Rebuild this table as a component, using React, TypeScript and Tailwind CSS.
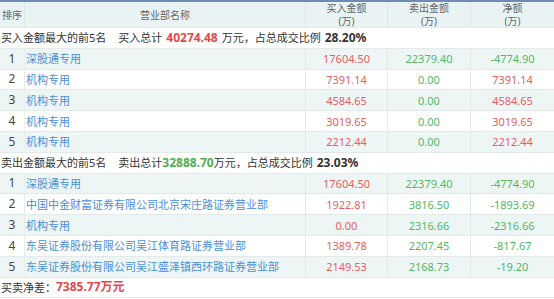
import React from "react";

type Row = { n: number; name: string; buy: string; sell: string; net: string; netPos: boolean };

const buyRows: Row[] = [
  { n: 1, name: "深股通专用", buy: "17604.50", sell: "22379.40", net: "-4774.90", netPos: false },
  { n: 2, name: "机构专用", buy: "7391.14", sell: "0.00", net: "7391.14", netPos: true },
  { n: 3, name: "机构专用", buy: "4584.65", sell: "0.00", net: "4584.65", netPos: true },
  { n: 4, name: "机构专用", buy: "3019.65", sell: "0.00", net: "3019.65", netPos: true },
  { n: 5, name: "机构专用", buy: "2212.44", sell: "0.00", net: "2212.44", netPos: true },
];

const sellRows: Row[] = [
  { n: 1, name: "深股通专用", buy: "17604.50", sell: "22379.40", net: "-4774.90", netPos: false },
  { n: 2, name: "中国中金财富证券有限公司北京宋庄路证券营业部", buy: "1922.81", sell: "3816.50", net: "-1893.69", netPos: false },
  { n: 3, name: "机构专用", buy: "0.00", sell: "2316.66", net: "-2316.66", netPos: false },
  { n: 4, name: "东吴证券股份有限公司吴江体育路证券营业部", buy: "1389.78", sell: "2207.45", net: "-817.67", netPos: false },
  { n: 5, name: "东吴证券股份有限公司吴江盛泽镇西环路证券营业部", buy: "2149.53", sell: "2168.73", net: "-19.20", netPos: false },
];

const grid = "grid grid-cols-[25px_281px_82px_83px_83px]";
const red = "text-[#e8605f]";
const green = "text-[#55b865]";

function DataRow({ r }: { r: Row }) {
  const bg = r.n % 2 === 1 ? "bg-[#edf6f5]" : "bg-white";
  return (
    <div className={`${grid} ${bg} h-[20.8px] border-b border-[#e3ebea] items-center`}>
      <div className="text-center text-[#444] border-r border-[#e6eeed] h-full flex items-center justify-center text-[12px]">{r.n}</div>
      <div className="pl-[1px] text-[#4a8fd8] whitespace-nowrap overflow-hidden border-r border-[#e3ebea] h-full flex items-center">{r.name}</div>
      <div className={`text-center ${red} border-r border-[#e3ebea] h-full flex items-center justify-center`}>{r.buy}</div>
      <div className={`text-center ${green} border-r border-[#e3ebea] h-full flex items-center justify-center`}>{r.sell}</div>
      <div className={`text-center ${r.netPos ? red : green} h-full flex items-center justify-center`}>{r.net}</div>
    </div>
  );
}

export default function App() {
  return (
    <div
      className="w-[554px] h-[299px] bg-white text-[11px] leading-none overflow-hidden"
      style={{ fontFamily: '"Noto Sans", "Noto Sans CJK SC", sans-serif' }}
    >
      <div className="border-t-2 border-[#6f8bb3]">
        <div className={`${grid} h-[26px] bg-[#e9f3f3] text-[#666] text-[10px] border-b border-[#e3ebea]`}>
          <div className="flex items-center justify-center border-r border-[#dde7e6]">排序</div>
          <div className="flex items-center justify-center border-r border-[#dde7e6]">营业部名称</div>
          <div className="flex flex-col items-center justify-center gap-[3px] border-r border-[#dde7e6]">
            <span>买入金额</span>
            <span>(万)</span>
          </div>
          <div className="flex flex-col items-center justify-center gap-[3px] border-r border-[#dde7e6]">
            <span>卖出金额</span>
            <span>(万)</span>
          </div>
          <div className="flex flex-col items-center justify-center gap-[3px]">
            <span>净额</span>
            <span>(万)</span>
          </div>
        </div>
      </div>

      <div className="h-[20.8px] bg-white border-b border-[#e3ebea] flex items-center pl-[1px] text-[#333] whitespace-nowrap">
        <span>买入金额最大的前5名</span>
        <span className="ml-[12px]">买入总计</span>
        <span className="font-bold text-[#e24a4a] mx-[4px] text-[12px]">40274.48</span>
        <span>万元，占总成交比例</span>
        <span className="font-bold text-[#333] ml-[4px] text-[12px]">28.20%</span>
      </div>
      {buyRows.map((r) => (
        <DataRow key={"b" + r.n} r={r} />
      ))}

      <div className="h-[20.8px] bg-white border-b border-[#e3ebea] flex items-center pl-[1px] text-[#333] whitespace-nowrap">
        <span>卖出金额最大的前5名</span>
        <span className="ml-[12px]">卖出总计</span>
        <span className="font-bold text-[#4caf50] text-[12px]">32888.70</span>
        <span>万元，占总成交比例</span>
        <span className="font-bold text-[#333] ml-[4px] text-[12px]">23.03%</span>
      </div>
      {sellRows.map((r) => (
        <DataRow key={"s" + r.n} r={r} />
      ))}

      <div className="h-[20.8px] bg-white border-b border-[#e3ebea] flex items-center pl-[1px] text-[#333] whitespace-nowrap">
        <span>买卖净差：</span>
        <span className="font-bold text-[#e24a4a] text-[12px]">7385.77万元</span>
      </div>
    </div>
  );
}
